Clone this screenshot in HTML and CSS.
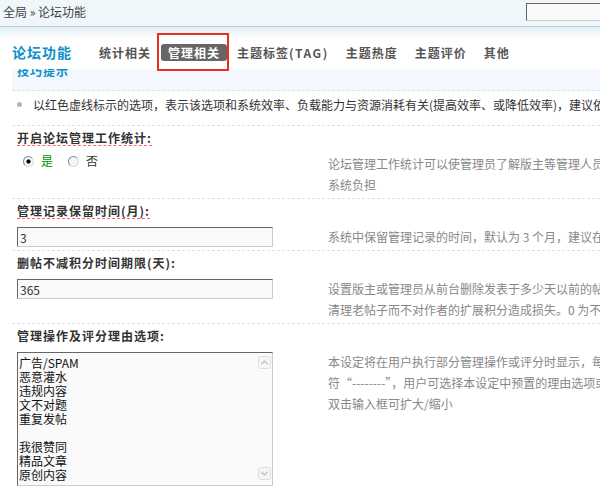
FILE: index.html
```html
<!DOCTYPE html>
<html lang="zh-CN">
<head>
<meta charset="utf-8">
<title>论坛功能</title>
<link rel="stylesheet" href="styles.css">
</head>
<body>
<div class="topbar">
  <div class="crumb">全局 &raquo; 论坛功能</div>
  <input class="search" type="text">
</div>
<div class="header">
  <h1 class="title">论坛功能</h1>
  <ul class="tabs">
    <li class="tab">统计相关</li>
    <li class="tab active">管理相关<span class="mark"></span></li>
    <li class="tab">主题标签<span class="en">(TAG)</span></li>
    <li class="tab">主题热度</li>
    <li class="tab">主题评价</li>
    <li class="tab">其他</li>
  </ul>
</div>
<div class="main">
  <div class="tips"><h3 class="tips-title">技巧提示</h3></div>
  <ul class="tiplist">
    <li>以红色虚线标示的选项，表示该选项和系统效率、负载能力与资源消耗有关(提高效率、或降低效率)，建议依据自身服务器情况进行设置。</li>
  </ul>

  <div class="setting">
    <div class="label-row"><span class="label warn">开启论坛管理工作统计:</span></div>
    <div class="field">
      <div class="control radios">
        <label class="radio on"><input type="radio" name="stat" checked>是</label>
        <label class="radio"><input type="radio" name="stat">否</label>
      </div>
      <div class="desc">论坛管理工作统计可以使管理员了解版主等管理人员的工作情况，注意：本功能会轻微加重<br>系统负担</div>
    </div>
  </div>

  <div class="setting">
    <div class="label-row"><span class="label warn">管理记录保留时间(月):</span></div>
    <div class="field">
      <div class="control"><input class="input" type="text" value="3"></div>
      <div class="desc">系统中保留管理记录的时间，默认为 3 个月，建议在 3～6 个月的范围内取值</div>
    </div>
  </div>

  <div class="setting">
    <div class="label-row"><span class="label">删帖不减积分时间期限(天):</span></div>
    <div class="field">
      <div class="control"><input class="input" type="text" value="365"></div>
      <div class="desc">设置版主或管理员从前台删除发表于多少天以前的帖子时，不更新用户的扩展积分，可用于<br>清理老帖子而不对作者的扩展积分造成损失。0 为不限制，默认为 0</div>
    </div>
  </div>

  <div class="setting">
    <div class="label-row"><span class="label">管理操作及评分理由选项:</span></div>
    <div class="field">
      <div class="control">
        <div class="textbox">
<textarea>广告/SPAM
恶意灌水
违规内容
文不对题
重复发帖

我很赞同
精品文章
原创内容</textarea>
          <div class="scroll">
            <svg class="sbtn" width="13" height="13" viewBox="0 0 13 13"><rect x="0.5" y="0.5" width="12" height="12" rx="2" fill="#f5f5f5" stroke="#dedede"/><path d="M3.5 8 L6.5 5 L9.5 8" fill="none" stroke="#bdbdbd" stroke-width="1.2"/></svg>
            <svg class="sbtn" width="13" height="13" viewBox="0 0 13 13"><rect x="0.5" y="0.5" width="12" height="12" rx="2" fill="#f5f5f5" stroke="#dedede"/><path d="M3.5 5 L6.5 8 L9.5 5" fill="none" stroke="#bdbdbd" stroke-width="1.2"/></svg>
          </div>
        </div>
      </div>
      <div class="desc">本设定将在用户执行部分管理操作或评分时显示，每个理由一行，如果空行则显示一行分隔<br>符“--------”，用户可选择本设定中预置的理由选项或自行输入<br>双击输入框可扩大/缩小</div>
    </div>
  </div>
</div>
</body>
</html>
```

FILE: styles.css
```css
html, body {
  margin: 0;
  padding: 0;
  overflow: hidden;
  background: #fff;
}
body {
  width: 600px;
  height: 489px;
  font-family: "Noto Sans CJK SC", "Liberation Sans", sans-serif;
  font-size: 12px;
  line-height: 1.4;
  color: #333;
}

/* top bar */
.topbar {
  height: 26px;
  border-bottom: 1px solid #b6d4dd;
  background: #f0f7fa;
  display: flex;
  align-items: flex-start;
}
.crumb {
  padding: 5px 0 0 3px;
  line-height: 14px;
  color: #444;
}
.search {
  margin: 3px -30px 0 auto;
  width: 104px;
  height: 18px;
  box-sizing: border-box;
  border: 1px solid;
  border-color: #666 #ccc #ccc #666;
  background: #f9f9f9;
  padding: 0;
  flex-shrink: 0;
}

/* header */
.header {
  height: 42px;
  box-sizing: border-box;
  padding: 8px 0 0 12px;
  display: flex;
  align-items: center;
  background: linear-gradient(#e3eff4, #fff 12px);
  position: relative;
  z-index: 2;
}
.title {
  margin: 0;
  width: 60px;
  font-size: 14px;
  line-height: 17px;
  font-weight: bold;
  letter-spacing: 1px;
  color: #0e90c8;
}
.tabs {
  list-style: none;
  margin: 0 0 0 20px;
  padding: 0;
  display: flex;
  gap: 3px;
}
.tab {
  position: relative;
  padding: 0 7px;
  line-height: 17px;
  font-weight: bold;
  letter-spacing: 1px;
  color: #555;
  border-radius: 3px;
  white-space: nowrap;
}
.tab .en {
  letter-spacing: 1.5px;
}
.tab.active {
  background: #666;
  color: #fff;
}
.mark {
  position: absolute;
  left: -4px;
  right: -2px;
  top: -11px;
  bottom: -10px;
  border: 2px solid #e8301c;
}

/* main */
.main {
  padding-left: 12px;
}
.tips {
  height: 22px;
  box-sizing: border-box;
  background: #f2f8fd;
  border-bottom: 1px dashed #d4e5f1;
  overflow: hidden;
}
.tips-title {
  margin: -4px 0 0 5px;
  font-size: 12px;
  line-height: 12px;
  font-weight: bold;
  letter-spacing: 1px;
  color: #0e90c8;
}
.tiplist {
  list-style: none;
  margin: 0;
  padding: 6px 0 12px 0;
  line-height: 16px;
  white-space: nowrap;
}
.tiplist li {
  position: relative;
  padding-left: 21px;
  color: #333;
}
.tiplist li::before {
  content: "";
  position: absolute;
  left: 5px;
  top: 5px;
  width: 5px;
  height: 5px;
  border-radius: 50%;
  background: #b4b4b4;
}

/* settings */
.setting {
  border-top: 1px dashed #d4e5f1;
  padding: 0 0 3px 5px;
}
.label-row {
  display: flex;
  padding-top: 4px;
  margin-bottom: 8px;
}
.label {
  line-height: 15px;
  font-weight: bold;
  letter-spacing: 1px;
  color: #333;
  border-bottom: 1px dashed transparent;
}
.label.warn {
  border-bottom-color: #f66;
}
.field {
  display: flex;
  align-items: flex-start;
}
.control {
  width: 311px;
  flex-shrink: 0;
}
.desc {
  margin-top: -1px;
  line-height: 21px;
  color: #888;
  white-space: nowrap;
}
.input {
  display: block;
  width: 256px;
  height: 20px;
  box-sizing: border-box;
  margin: 0;
  border: 1px solid;
  border-color: #666 #ccc #ccc #666;
  background: #f9f9f9;
  padding: 0 0 0 2px;
  font-family: "Noto Sans CJK SC", "Liberation Sans", sans-serif;
  font-size: 12px;
  color: #333;
  outline: none;
}

/* radios */
.radios {
  display: flex;
  align-items: center;
  height: 16px;
  margin-top: -1px;
  padding-left: 6px;
  box-sizing: border-box;
}
.radio {
  display: flex;
  align-items: center;
  line-height: 16px;
  margin-right: 15px;
  color: #333;
}
.radio.on {
  color: #090;
}
.radio input {
  appearance: none;
  -webkit-appearance: none;
  margin: 0 7px 0 0;
  width: 11px;
  height: 11px;
  box-sizing: border-box;
  border-radius: 50%;
  border: 1px solid;
  border-color: #8a8a8a #dcdcdc #dcdcdc #8a8a8a;
  background: #f4f4f4;
}
.radio input:checked {
  background: radial-gradient(circle, #000 0 1.8px, #f4f4f4 2.4px);
}

/* textarea */
.textbox {
  display: flex;
  width: 256px;
  height: 134px;
  box-sizing: border-box;
  border: 1px solid;
  border-color: #666 #ccc #ccc #666;
  background: #fafafa;
}
.textbox textarea {
  flex: 1;
  min-width: 0;
  border: 0;
  margin: 0;
  padding: 3px 0 0 1px;
  font-family: "Noto Sans CJK SC", "Liberation Sans", sans-serif;
  font-size: 12px;
  line-height: 14px;
  color: #111;
  background: transparent;
  resize: none;
  overflow: hidden;
  outline: none;
}
.scroll {
  width: 16px;
  display: flex;
  flex-direction: column;
  justify-content: space-between;
  align-items: center;
  padding: 3px 0 5px 0;
}
.sbtn {
  display: block;
}
```
